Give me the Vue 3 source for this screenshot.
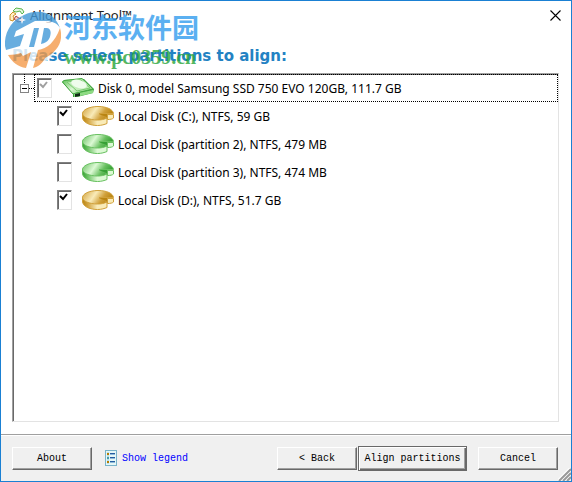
<script setup>
import { reactive, ref } from 'vue';

const disk = reactive({
    label: 'Disk 0, model Samsung SSD 750 EVO 120GB, 111.7 GB',
    checked: true,
});

const partitions = reactive([
    { id: 'c', label: 'Local Disk (C:), NTFS, 59 GB', color: 'gold', checked: true },
    { id: 'p2', label: 'Local Disk (partition 2), NTFS, 479 MB', color: 'green', checked: false },
    { id: 'p3', label: 'Local Disk (partition 3), NTFS, 474 MB', color: 'green', checked: false },
    { id: 'd', label: 'Local Disk (D:), NTFS, 51.7 GB', color: 'gold', checked: true },
]);

const expanded = ref(true);
</script>

<template>
    <div class="window">
        <header class="titlebar">
            <svg class="app-icon" width="16" height="16" viewBox="0 0 16 16" fill="none">
                <path d="M4 4l3-3 6 1 2 3-2 2-2-3-4 1z" fill="#e4f7df" stroke="#5bb54e" />
                <path d="M4 5L1 8v5l3 1 1-3-1-2 3-2z" fill="#fff0c8" stroke="#cf9425" />
                <path d="M7 9l4 3 2-2v4l-4 1-4-3z" fill="#f2c8c5" stroke="#aa4942" />
            </svg>
            <span class="title">Alignment Tool™</span>
            <button class="close" type="button" aria-label="Close">
                <svg width="11" height="11" viewBox="0 0 11 11">
                    <path d="M.5.5l10 10M10.5.5l-10 10" stroke="#000" stroke-width="1.1" />
                </svg>
            </button>
        </header>

        <main class="content">
            <h1>Please select partitions to align:</h1>
            <div class="tree">
                <div class="disk-row">
                    <button
                        class="expander"
                        type="button"
                        aria-label="Toggle partitions"
                        :aria-expanded="expanded"
                        @click="expanded = !expanded"
                    >
                        <svg width="20" height="28" viewBox="0 0 20 28" shape-rendering="crispEdges">
                            <path d="M10.5 0v10M15 14.5h5" stroke="#000" stroke-dasharray="1 1" />
                            <path d="M6.5 10.5h8v8h-8z" fill="#fff" stroke="#848484" />
                            <path d="M8 14.5h5" stroke="#000" />
                            <path v-if="!expanded" d="M10.5 12v5" stroke="#000" />
                        </svg>
                    </button>
                    <label class="item focused">
                        <span class="check muted">
                            <input v-model="disk.checked" type="checkbox" />
                            <svg v-if="disk.checked" width="9" height="8" viewBox="0 0 9 8">
                                <path d="M1 3l3 3 4-5" />
                            </svg>
                        </span>
                        <svg class="drive" width="32" height="20" viewBox="0 0 32 20">
                            <defs>
                                <linearGradient id="drive-top" x1="0" y1="0" x2="1" y2="1">
                                    <stop offset="0" stop-color="#58bd50" />
                                    <stop offset=".5" stop-color="#dcf7d4" />
                                    <stop offset="1" stop-color="#65c65c" />
                                </linearGradient>
                            </defs>
                            <path d="M0 4l11 12v3h4l16-4 1-4L22 1 2 2z" fill="#359d38" />
                            <path d="M.5 4L2 2.500 20 .5 31 11l-17 4-3 1z" fill="url(#drive-top)" stroke="#46aa42" />
                            <path d="M5 4l14-2 9 8-13 3z" fill="#c4edbb" stroke="#7acb70" />
                            <ellipse cx="17" cy="6" rx="8" ry="4" transform="rotate(16 17 6)" fill="#effcec" />
                            <path d="M12 16l19-4v3l-17 4h-2z" fill="#8edb83" />
                            <path d="M13 16l5-1v3l-5 1z" fill="#102b15" />
                        </svg>
                        <span>{{ disk.label }}</span>
                    </label>
                </div>
                <ul v-if="expanded" class="partitions">
                    <li v-for="part in partitions" :key="part.id">
                        <label class="item">
                            <span class="check">
                                <input v-model="part.checked" type="checkbox" />
                                <svg v-if="part.checked" width="9" height="8" viewBox="0 0 9 8">
                                    <path d="M1 3l3 3 4-5" />
                                </svg>
                            </span>
                            <svg class="pie" :class="part.color" width="32" height="20" viewBox="0 0 32 20">
                                <defs>
                                    <linearGradient :id="`top-${part.id}`" x1="0" y1="0" x2="1" y2=".3">
                                        <stop class="mid" offset="0" />
                                        <stop class="pale" offset=".45" />
                                        <stop class="mid" offset=".75" />
                                        <stop class="dark" offset="1" />
                                    </linearGradient>
                                    <linearGradient :id="`side-${part.id}`">
                                        <stop class="dark" offset="0" />
                                        <stop class="mid" offset=".2" />
                                        <stop class="pale" offset=".6" />
                                        <stop class="pale" offset="1" />
                                    </linearGradient>
                                </defs>
                                <path
                                    class="outline"
                                    d="M.5 7v5c1 5 8 7.500 15 7.500 4 0 7-1 9.500-2V12L16 8z"
                                    :fill="`url(#side-${part.id})`"
                                />
                                <path
                                    class="outline"
                                    d="M31.500 7.500H17l8 4.500c-3 1.500-6 2-9.500 2C7 14 .5 11 .5 7.500S7 .5 16 .5s15 3 15.500 7z"
                                    :fill="`url(#top-${part.id})`"
                                />
                                <path class="notch-inner" d="M17 8h9v4z" />
                                <path class="notch" d="M25.500 8.500h6V12c-1 1-3 1.500-6 1.500z" />
                            </svg>
                            <span>{{ part.label }}</span>
                        </label>
                    </li>
                </ul>
            </div>
        </main>

        <footer class="footer">
            <button class="btn" type="button">About</button>
            <a class="legend" href="#">
                <svg width="12" height="16" viewBox="0 0 12 16" shape-rendering="crispEdges">
                    <path d="M0 0h12v16H0z" fill="#79b3c9" />
                    <path d="M1 1h10v14H1z" fill="#e5f7f7" />
                    <path d="M2 2h2v12H2z" fill="#b9dee5" />
                    <path d="M2 3h2v2H2zM2 11h2v2H2z" fill="#b77b00" />
                    <path d="M2 7h2v2H2z" fill="#489aa9" />
                    <path d="M5 3h5v1H5zM5 7h5v1H5zM5 11h5v1H5z" fill="#245ca0" />
                    <path d="M5 4h5v1H5zM5 8h5v1H5zM5 12h5v1H5z" fill="#8fbad8" />
                </svg>
                <span>Show legend</span>
            </a>
            <div class="actions">
                <button class="btn" type="button">&lt; Back</button>
                <button class="btn primary" type="button">Align partitions</button>
                <button class="btn cancel" type="button">Cancel</button>
            </div>
            <svg class="grip" width="13" height="13" viewBox="0 0 13 13">
                <path d="M0 13L13 0M4 13l9-9M8 13l5-5" stroke="#fff" stroke-width="3" />
                <path d="M1 13L13 1M5 13l8-8M9 13l4-4" stroke="#999" stroke-width="2" />
            </svg>
        </footer>

        <div class="watermark">
            <svg width="56" height="58" viewBox="0 0 56 58">
                <path d="M10 10c10-9 28-12 39-2 6 6 8 12 7 18-2 16-17 31-35 31C14 57 8 52 4 44z" fill="#fff" />
                <path
                    d="M0 35C-1 21 7 9 19 4 29-1 41 0 48 6c3 3 5 6 7 11-3-5-8-7-14-7H30L11 20l-2 6 10-3-4 12-14 4z"
                    fill="#4299d8"
                />
                <path d="M34 17l-5 19h-5l5-19z" fill="#4299d8" />
                <path d="M39 17h3c5 1 4 7 2 11-2 3-4 4-8 5z" fill="#4299d8" />
                <path
                    d="M55 17c4 14-3 24-15 30-2 5-7 9-12 10l5-18c9-1 17-8 22-22z"
                    fill="#f49b4b"
                />
                <path d="M3 44c5 0 9-1 13-2l2 3 8-4-5 16C13 56 7 51 3 44z" fill="#f49b4b" />
                <path d="M17 5l1 3 3 1-3 1-1 3-1-3-3-1 3-1z" fill="#fff" />
            </svg>
            <div class="watermark-text">
                <span class="site-name">河东软件园</span>
                <span class="site-url">www.pc0359.cn</span>
            </div>
        </div>
    </div>
</template>

<style>
body {
    margin: 0;
}
</style>

<style scoped>
.window {
    position: relative;
    box-sizing: border-box;
    min-height: 100vh;
    display: flex;
    flex-direction: column;
    border: 1px solid #1a80d3;
    background: #fff;
    color: #000;
    font-family: "Noto Sans", sans-serif;
    font-size: 12px;
}

.titlebar {
    display: flex;
    align-items: center;
    gap: 5px;
    height: 28px;
    padding: 0 8px;

    .title {
        font-size: 13px;
        color: #222;
    }

    .close {
        display: flex;
        margin-left: auto;
        padding: 2px;
        border: 0;
        background: none;
    }
}

.content {
    flex: 1;
    display: flex;
    flex-direction: column;
    padding: 15px 12px 12px 11px;
}

h1 {
    margin: 0 0 5px;
    font-family: "DejaVu Sans", sans-serif;
    font-size: 15px;
    font-weight: bold;
    line-height: 24px;
    color: #2382c3;
}

.tree {
    flex: 1;
    border: 1px solid;
    border-color: #a0a0a0 #e3e3e3 #e3e3e3 #a0a0a0;
    box-shadow: inset 1px 1px #696969;
    padding: 0 0 0 1px;
}

.disk-row {
    display: flex;
}

.expander {
    display: flex;
    padding: 0;
    border: 0;
    background: none;
}

.item {
    display: flex;
    align-items: center;
    box-sizing: border-box;
    height: 28px;
    white-space: nowrap;

    .drive,
    .pie {
        margin: 0 4px 0 10px;
    }
}

.focused {
    flex: 1;
    border: 1px dotted #000;
    padding-left: 2px;
}

.partitions {
    margin: 0;
    padding: 0 0 0 43px;
    list-style: none;
}

.check {
    display: grid;

    input,
    svg {
        grid-area: 1 / 1;
    }

    input {
        appearance: none;
        box-sizing: border-box;
        width: 15px;
        height: 20px;
        margin: 0;
        border: 1px solid;
        border-color: #808080 #e3e3e3 #e3e3e3 #808080;
        box-shadow: inset 1px 1px #696969;
        background: #fff;
    }

    svg {
        margin: 3px 0 0 2px;
        fill: none;
        stroke: #000;
        stroke-width: 2;
        pointer-events: none;
    }
}

.muted svg {
    stroke: #a0a0a0;
}

.pie {
    .dark { stop-color: var(--dark); }
    .mid { stop-color: var(--mid); }
    .pale { stop-color: var(--pale); }
    .outline { stroke: var(--mid); }
    .notch { fill: var(--pale); stroke: var(--mid); }
    .notch-inner { fill: var(--dark); }
}

.gold {
    --dark: #b98512;
    --mid: #d0a03a;
    --pale: #f9ebb8;
}

.green {
    --dark: #37a035;
    --mid: #68c060;
    --pale: #dcf9d4;
}

.footer {
    position: relative;
    display: flex;
    align-items: center;
    height: 46px;
    padding: 0 13px 0 11px;
    border-top: 1px solid #a0a0a0;
    box-shadow: inset 0 1px #fff;
    background: #f0f0f0;
    font-family: "Liberation Mono", monospace;
    font-size: 10px;
}

.btn {
    box-sizing: border-box;
    width: 80px;
    height: 23px;
    padding: 0;
    border: 1px solid;
    border-color: #fff #696969 #696969 #fff;
    box-shadow: inset -1px -1px #a0a0a0;
    background: #f0f0f0;
    color: #000;
    font: inherit;
    white-space: nowrap;
}

.primary {
    width: 109px;
    height: 25px;
    border-color: #696969;
    box-shadow: inset 1px 1px #fff, inset -1px -1px #696969, inset -2px -2px #a0a0a0;
}

.legend {
    display: flex;
    align-items: center;
    gap: 5px;
    margin-left: 13px;
    color: #00f;
    text-decoration: none;
}

.actions {
    display: flex;
    align-items: center;
    gap: 1px;
    margin-left: auto;

    .cancel {
        margin-left: 10px;
    }
}

.grip {
    position: absolute;
    right: 0;
    bottom: 0;
}

.watermark {
    position: absolute;
    top: 10px;
    left: 4px;
    display: flex;
    gap: 3px;
    opacity: 0.8;
    pointer-events: none;
}

.watermark-text {
    display: flex;
    flex-direction: column;
    white-space: nowrap;

    .site-name {
        font-family: "Noto Sans CJK SC", sans-serif;
        font-size: 27px;
        font-weight: bold;
        line-height: 32px;
        color: #339dee;
    }

    .site-url {
        font-family: "Liberation Serif", serif;
        font-size: 20px;
        font-weight: bold;
        line-height: 28px;
        color: #29a63a;
    }
}
</style>
